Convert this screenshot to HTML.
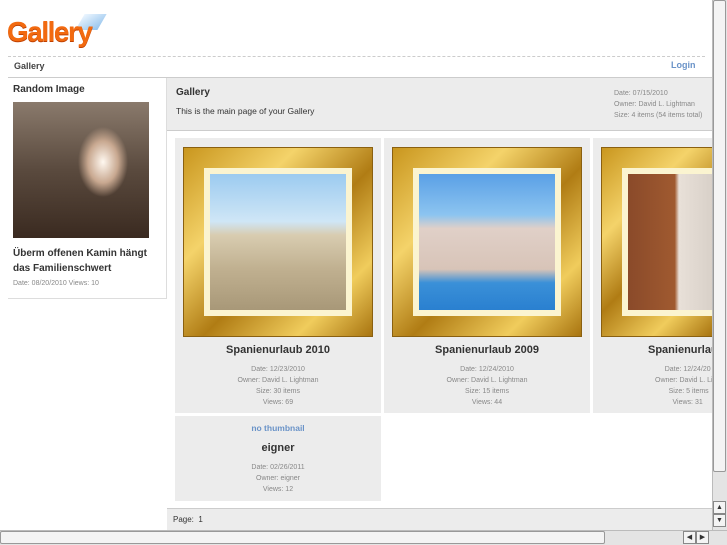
<!DOCTYPE html>
<html><head><meta charset="utf-8"><style>
*{margin:0;padding:0;box-sizing:border-box}
body{width:727px;height:545px;overflow:hidden;background:#fff;font-family:"Liberation Sans",sans-serif;color:#333;position:relative}
.a{position:absolute}
.logo{left:7px;top:16px;font:bold 28px "Liberation Sans",sans-serif;color:#f26a10;letter-spacing:-1.5px;text-shadow:0 1px 0 #c04000}
.hl{border-top:1px dashed #ccc;height:0}
.frame{background:linear-gradient(135deg,#c9961e,#f4d36a 30%,#b07c14 55%,#f0cc5c 80%,#a87410);border:1px solid #8a6010}
.mat{background:#fbf4d0;position:absolute}
.ph{position:absolute}
.cell{background:#ececec}
.t{font-weight:bold;font-size:11px;text-align:center;color:#333}
.m{font-size:7px;color:#888;text-align:center;line-height:11px}
</style></head><body>
<div class="a" style="left:80px;top:14px;width:22px;height:16px;background:linear-gradient(135deg,#e8f4ff,#7ab4e8);transform:skewX(-30deg);opacity:.8"></div>
<div class="a logo">Gallery</div>
<div class="a hl" style="left:8px;top:56px;width:697px"></div>
<div class="a" style="left:14px;top:61px;font-size:9px;font-weight:bold;color:#444">Gallery</div>
<div class="a" style="left:671px;top:60px;font-size:9px;font-weight:bold;color:#6a93c8">Login</div>
<div class="a" style="left:8px;top:77px;width:704px;border-top:1px solid #ccc"></div>
<div class="a" style="left:8px;top:78px;width:159px;height:221px;border-right:1px solid #ddd;border-bottom:1px solid #ddd"></div>
<div class="a" style="left:13px;top:84px;font-size:10px;font-weight:bold">Random Image</div>
<div class="a" style="left:13px;top:102px;width:136px;height:136px;background:radial-gradient(ellipse 25px 35px at 90px 60px,#fff8f0,#c8a890 60%,transparent 100%),linear-gradient(180deg,#8a7a6c,#5a4a3e 50%,#3a2a20)"></div>
<div class="a" style="left:13px;top:246px;width:145px;font-size:10px;font-weight:bold;line-height:15px">Überm offenen Kamin hängt das Familienschwert</div>
<div class="a" style="left:13px;top:280px;font-size:7px;color:#888">Date: 08/20/2010 Views: 10</div>
<div class="a" style="left:167px;top:78px;width:545px;height:53px;background:#ececec;border-bottom:1px solid #ccc"></div>
<div class="a" style="left:176px;top:87px;font-size:10px;font-weight:bold">Gallery</div>
<div class="a" style="left:176px;top:106px;font-size:8.5px">This is the main page of your Gallery</div>
<div class="a" style="left:614px;top:88px;font-size:7px;color:#888;line-height:11px">Date: 07/15/2010<br>Owner: David L. Lightman<br>Size: 4 items (54 items total)</div>

<div class="a cell" style="left:175px;top:138px;width:206px;height:275px"></div>
<div class="a cell" style="left:384px;top:138px;width:206px;height:275px"></div>
<div class="a cell" style="left:593px;top:138px;width:119px;height:275px"></div>

<div class="a frame" style="left:183px;top:147px;width:190px;height:190px"><div class="mat" style="left:20px;top:20px;width:148px;height:148px"></div><div class="ph" style="left:26px;top:26px;width:136px;height:136px;background:linear-gradient(180deg,#9ccbf0 0%,#cfe6f6 35%,#d8ccb0 45%,#c0b090 70%,#a89878)"></div></div>
<div class="a frame" style="left:392px;top:147px;width:190px;height:190px"><div class="mat" style="left:20px;top:20px;width:148px;height:148px"></div><div class="ph" style="left:26px;top:26px;width:136px;height:136px;background:linear-gradient(180deg,#5aa0e6 0%,#8cc4f0 30%,#e0d0c8 40%,#d8c4b8 70%,#3a90d8 80%,#2a80d0)"></div></div>
<div class="a frame" style="left:601px;top:147px;width:111px;height:190px;border-right:none"><div class="mat" style="left:20px;top:20px;width:91px;height:148px"></div><div class="ph" style="left:26px;top:26px;width:85px;height:136px;background:linear-gradient(90deg,#8a4a2a 0%,#a05a30 55%,#e8e0d8 60%,#d8d0c8)"></div></div>

<div class="a t" style="left:175px;top:344px;width:206px">Spanienurlaub 2010</div>
<div class="a t" style="left:384px;top:344px;width:206px">Spanienurlaub 2009</div>
<div class="a t" style="left:648px;top:344px;white-space:nowrap">Spanienurlau</div>
<div class="a m" style="left:175px;top:364px;width:206px">Date: 12/23/2010<br>Owner: David L. Lightman<br>Size: 30 items<br>Views: 69</div>
<div class="a m" style="left:384px;top:364px;width:206px">Date: 12/24/2010<br>Owner: David L. Lightman<br>Size: 15 items<br>Views: 44</div>
<div class="a m" style="left:655px;top:364px;white-space:nowrap;text-align:left">&nbsp;&nbsp;&nbsp;&nbsp;&nbsp;Date: 12/24/20<br>Owner: David L. Li<br>&nbsp;&nbsp;&nbsp;&nbsp;&nbsp;&nbsp;&nbsp;Size: 5 items<br>&nbsp;&nbsp;&nbsp;&nbsp;&nbsp;&nbsp;&nbsp;&nbsp;&nbsp;Views: 31</div>

<div class="a cell" style="left:175px;top:416px;width:206px;height:85px"></div>
<div class="a" style="left:175px;top:423px;width:206px;text-align:center;font-size:8.5px;font-weight:bold;color:#6a93c8">no thumbnail</div>
<div class="a t" style="left:175px;top:442px;width:206px">eigner</div>
<div class="a m" style="left:175px;top:462px;width:206px">Date: 02/26/2011<br>Owner: eigner<br>Views: 12</div>

<div class="a" style="left:167px;top:508px;width:545px;height:22px;background:#ececec;border-top:1px solid #ccc"></div>
<div class="a" style="left:173px;top:515px;font-size:8px">Page: &nbsp;1</div>

<div class="a" style="left:712px;top:0;width:15px;height:530px;background:#e4e4e4;border-left:1px solid #bbb"></div>
<div class="a" style="left:713px;top:0;width:13px;height:472px;background:#f4f4f4;border:1px solid #999;border-radius:2px"></div>
<div class="a" style="left:713px;top:501px;width:13px;height:13px;background:#f4f4f4;border:1px solid #888;font-size:7px;text-align:center;line-height:11px">▲</div>
<div class="a" style="left:713px;top:514px;width:13px;height:13px;background:#f4f4f4;border:1px solid #888;font-size:7px;text-align:center;line-height:11px">▼</div>
<div class="a" style="left:0;top:530px;width:727px;height:15px;background:#e4e4e4;border-top:1px solid #bbb"></div>
<div class="a" style="left:0;top:531px;width:605px;height:13px;background:#f4f4f4;border:1px solid #999;border-radius:2px"></div>
<div class="a" style="left:683px;top:531px;width:13px;height:13px;background:#f4f4f4;border:1px solid #888;font-size:7px;text-align:center;line-height:11px">◀</div>
<div class="a" style="left:696px;top:531px;width:13px;height:13px;background:#f4f4f4;border:1px solid #888;font-size:7px;text-align:center;line-height:11px">▶</div>
</body></html>
